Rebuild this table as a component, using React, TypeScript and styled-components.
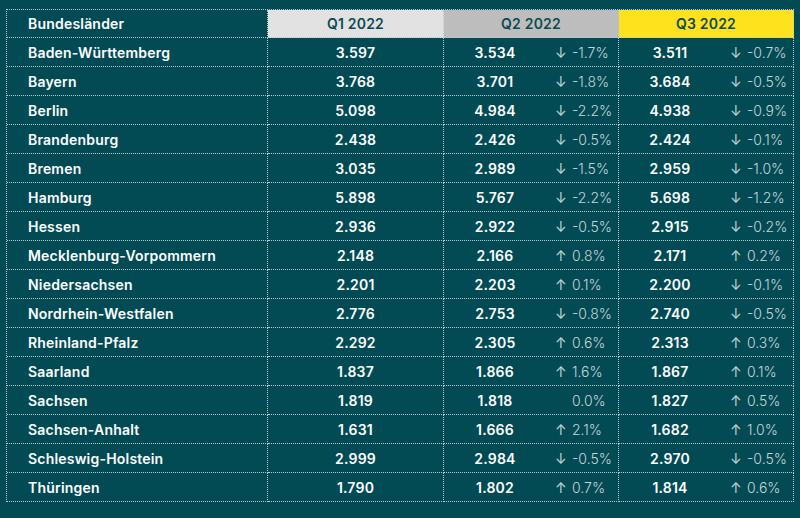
import React from "react";
import styled, { createGlobalStyle } from "styled-components";

const GlobalStyle = createGlobalStyle`
  html, body {
    margin: 0;
    padding: 0;
    background: #024b55;
  }
  body {
    font-family: Inter, "Noto Sans", "Liberation Sans", sans-serif;
    -webkit-font-smoothing: antialiased;
  }
`;

const Page = styled.div`
  width: 800px;
  height: 518px;
  box-sizing: border-box;
  padding: 9px 0 0 6px;
  background: #024b55;
`;

const dotted = "1px dotted #b9cacc";

const Table = styled.table`
  border-collapse: separate;
  border-spacing: 0;
  table-layout: fixed;
  width: 787px;
  border-top: ${dotted};
  border-left: ${dotted};
`;

const cellBase = `
  box-sizing: border-box;
  height: 29px;
  padding: 0;
  border-right: ${dotted};
  border-bottom: ${dotted};
  font-size: 14px;
  vertical-align: middle;
`;

const HeadCell = styled.th<{ $bg?: string }>`
  ${cellBase}
  height: 28px;
  background: ${(p) => p.$bg ?? "transparent"};
  color: ${(p) => (p.$bg ? "#0d4a53" : "#ffffff")};
  font-weight: 600;
  letter-spacing: 0.2px;
  text-align: center;
`;

const NameHead = styled(HeadCell)`
  text-align: left;
  padding-left: 21px;
`;

const NameCell = styled.td`
  ${cellBase}
  padding-left: 21px;
  color: #ffffff;
  font-weight: 600;
  letter-spacing: 0.2px;
  white-space: nowrap;
`;

const ValueCell = styled.td`
  ${cellBase}
  color: #ffffff;
  font-weight: 600;
  letter-spacing: 0.2px;
  text-align: center;
`;

const SplitCell = styled.td`
  ${cellBase}
`;

const Split = styled.div`
  display: flex;
  align-items: center;
`;

const Num = styled.span`
  width: 102px;
  text-align: center;
  color: #ffffff;
  font-weight: 600;
  letter-spacing: 0.2px;
`;

const Trend = styled.span`
  display: flex;
  align-items: center;
  margin-left: 9px;
  color: #c7d5d7;
  font-size: 14px;
  font-weight: 300;
`;

const Arrow = styled.span`
  width: 17px;
  display: inline-block;
  font-weight: 400;
`;

type RowData = {
  name: string;
  q1: string;
  q2: string;
  c2: number;
  q3: string;
  c3: number;
};

const data: RowData[] = [
  { name: "Baden-Württemberg", q1: "3.597", q2: "3.534", c2: -1.7, q3: "3.511", c3: -0.7 },
  { name: "Bayern", q1: "3.768", q2: "3.701", c2: -1.8, q3: "3.684", c3: -0.5 },
  { name: "Berlin", q1: "5.098", q2: "4.984", c2: -2.2, q3: "4.938", c3: -0.9 },
  { name: "Brandenburg", q1: "2.438", q2: "2.426", c2: -0.5, q3: "2.424", c3: -0.1 },
  { name: "Bremen", q1: "3.035", q2: "2.989", c2: -1.5, q3: "2.959", c3: -1.0 },
  { name: "Hamburg", q1: "5.898", q2: "5.767", c2: -2.2, q3: "5.698", c3: -1.2 },
  { name: "Hessen", q1: "2.936", q2: "2.922", c2: -0.5, q3: "2.915", c3: -0.2 },
  { name: "Mecklenburg-Vorpommern", q1: "2.148", q2: "2.166", c2: 0.8, q3: "2.171", c3: 0.2 },
  { name: "Niedersachsen", q1: "2.201", q2: "2.203", c2: 0.1, q3: "2.200", c3: -0.1 },
  { name: "Nordrhein-Westfalen", q1: "2.776", q2: "2.753", c2: -0.8, q3: "2.740", c3: -0.5 },
  { name: "Rheinland-Pfalz", q1: "2.292", q2: "2.305", c2: 0.6, q3: "2.313", c3: 0.3 },
  { name: "Saarland", q1: "1.837", q2: "1.866", c2: 1.6, q3: "1.867", c3: 0.1 },
  { name: "Sachsen", q1: "1.819", q2: "1.818", c2: 0.0, q3: "1.827", c3: 0.5 },
  { name: "Sachsen-Anhalt", q1: "1.631", q2: "1.666", c2: 2.1, q3: "1.682", c3: 1.0 },
  { name: "Schleswig-Holstein", q1: "2.999", q2: "2.984", c2: -0.5, q3: "2.970", c3: -0.5 },
  { name: "Thüringen", q1: "1.790", q2: "1.802", c2: 0.7, q3: "1.814", c3: 0.6 },
];

const fmt = (v: number) => `${v.toFixed(1)}%`;

function Change({ num, change }: { num: string; change: number }) {
  const arrow = change > 0 ? "↑" : change < 0 ? "↓" : "";
  return (
    <SplitCell>
      <Split>
        <Num>{num}</Num>
        <Trend>
          <Arrow>{arrow}</Arrow>
          {fmt(change)}
        </Trend>
      </Split>
    </SplitCell>
  );
}

export default function App() {
  return (
    <Page>
      <GlobalStyle />
      <Table>
        <colgroup>
          <col style={{ width: 261 }} />
          <col style={{ width: 176 }} />
          <col style={{ width: 175 }} />
          <col style={{ width: 175 }} />
        </colgroup>
        <thead>
          <tr>
            <NameHead>Bundesländer</NameHead>
            <HeadCell $bg="#e2e2e2">Q1 2022</HeadCell>
            <HeadCell $bg="#bdbdbd">Q2 2022</HeadCell>
            <HeadCell $bg="#ffe21e">Q3 2022</HeadCell>
          </tr>
        </thead>
        <tbody>
          {data.map((r) => (
            <tr key={r.name}>
              <NameCell>{r.name}</NameCell>
              <ValueCell>{r.q1}</ValueCell>
              <Change num={r.q2} change={r.c2} />
              <Change num={r.q3} change={r.c3} />
            </tr>
          ))}
        </tbody>
      </Table>
    </Page>
  );
}
